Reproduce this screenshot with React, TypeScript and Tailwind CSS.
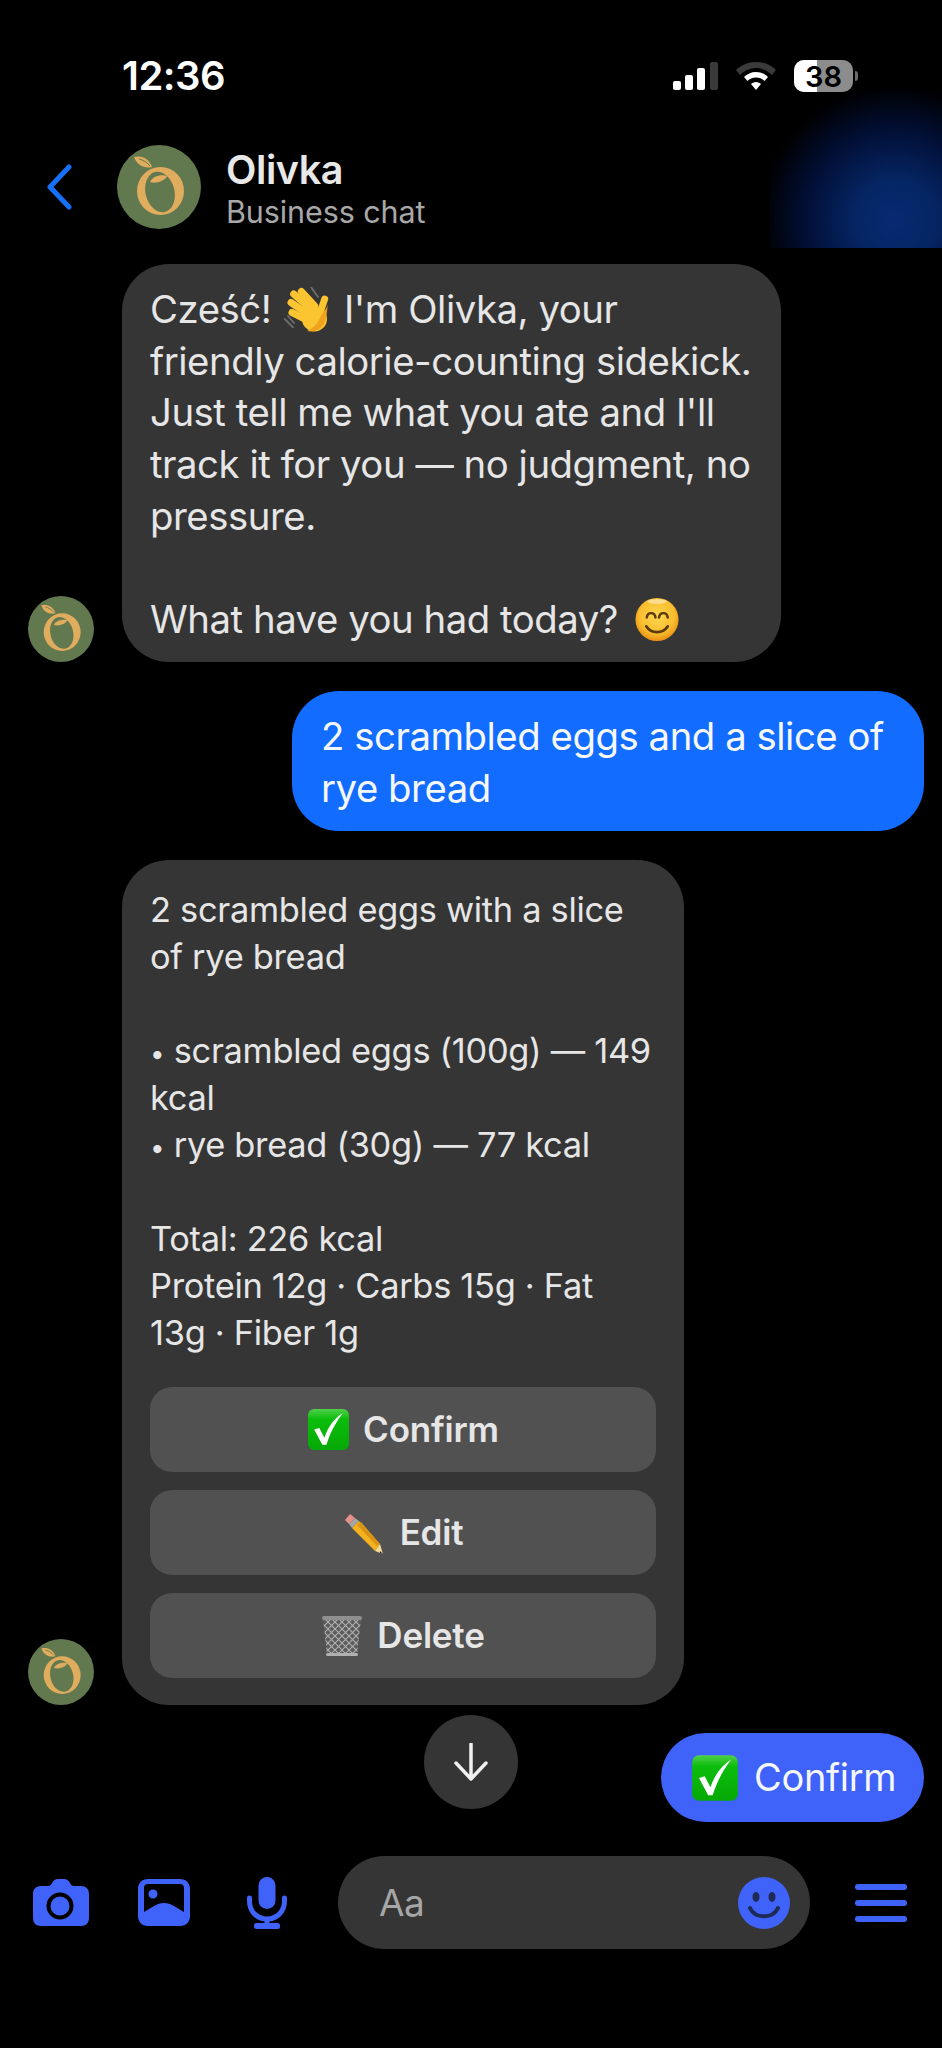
import React from "react";

const Avatar = ({ size }: { size: number }) => (
  <svg width={size} height={size} viewBox="0 0 84 84" className="shrink-0 block">
    <circle cx="42" cy="42" r="42" fill="#62784e" />
    <ellipse cx="43.500" cy="46" rx="23.500" ry="24" fill="#e0ac5e" />
    <ellipse cx="43" cy="47" rx="14.500" ry="20.500" fill="#62784e" transform="rotate(-14 43 47)" />
    <path fill="#e0ac5e" d="M17 12c7-2 15 1 18 10-8 2-15-2-18-10Z" />
    <path fill="#e0ac5e" d="M33 37c2-5 10-8 17-6-2 5-11 8-17 6Z" />
    <path stroke="#62784e" strokeWidth="1" fill="none" d="M22 14c4 1 8 3 11 7" />
  </svg>
);

const Check = ({ size }: { size: number }) => (
  <svg width={size} height={size} viewBox="0 0 42 42" className="shrink-0 block">
    <defs>
      <linearGradient id="chk" x1="0" y1="0" x2="0" y2="1">
        <stop offset="0" stopColor="#4fd04a" />
        <stop offset="0.25" stopColor="#0bbd0b" />
        <stop offset="1" stopColor="#06a806" />
      </linearGradient>
    </defs>
    <rect x="1" y="1" width="40" height="40" rx="6" fill="url(#chk)" />
    <path d="M7 21l5-1.500 5 9.500C21 18 26 11 35 5c-6 8-12 18-16 31h-4L7 21Z" fill="#fff" />
  </svg>
);

const Pencil = () => (
  <svg width="42" height="42" viewBox="0 0 42 42" className="shrink-0 block">
    <path d="M2 8l5-6 5 4-6 6-4-4Z" fill="#e8908a" />
    <path d="M6 12l6-6 4 3-7 7-3-4Z" fill="#a5a5a5" />
    <path d="M9 16l7-7 21 23-5 7L9 16Z" fill="#f5b21e" />
    <path d="M14 13l4-3 19 22-3 2L14 13Z" fill="#d99416" />
    <path d="M32 39l5-7 3 10-8-3Z" fill="#f4d79a" />
    <path d="M37 39l3 3-3-1Z" fill="#222" />
  </svg>
);

const Bin = () => (
  <svg width="42" height="42" viewBox="0 0 42 42" className="shrink-0 block">
    <defs>
      <pattern id="mesh" width="7" height="7" patternUnits="userSpaceOnUse">
        <path d="M0 0L7 7M7 0L0 7" stroke="#b0b0b0" strokeWidth="1.100" />
      </pattern>
    </defs>
    <path d="M2 3h38l-4 37H6L2 3Z" fill="#5c5c5c" />
    <path d="M2 3h38l-4 37H6L2 3Z" fill="url(#mesh)" />
    <rect x="1" y="1" width="40" height="4" rx="2" fill="#8f8f8f" />
    <rect x="5" y="38" width="32" height="3" rx="1.500" fill="#b0b0b0" />
  </svg>
);

const Wave = () => (
  <svg width="48" height="46" viewBox="0 0 48 46" className="inline-block align-[-10px] mx-[2px]">
    <path d="M27.300 0.500 34 10M0.700 32 9 40.300M4 29l6 7" stroke="#6e6e6e" strokeWidth="1.800" strokeLinecap="round" fill="none" />
    <g stroke="#fbc531" strokeWidth="7" strokeLinecap="round" fill="none">
      <path d="M17.300 4.500 30.700 19" />
      <path d="M9.700 7 25.700 21" />
      <path d="M7 15.500 22.300 26" />
      <path d="M8 25.500 21 32" />
      <path d="M40.700 12 35.700 27" />
    </g>
    <ellipse cx="30.500" cy="32" rx="12.500" ry="12.500" fill="#fbc531" />
    <path d="M23 44c9 2 17-3 19-13 1-4 1-9 2-14-1 5-5 8-7 12-3 7-7 12-14 15Z" fill="#f0a31c" />
  </svg>
);

const Smile = () => (
  <svg width="46" height="45" viewBox="0 0 46 46" className="inline-block align-[-9px] ml-[6px]">
    <defs>
      <radialGradient id="sm" cx="0.5" cy="0.42" r="0.58">
        <stop offset="0" stopColor="#fdd64f" />
        <stop offset="0.7" stopColor="#f9bd2e" />
        <stop offset="1" stopColor="#e88f14" />
      </radialGradient>
    </defs>
    <circle cx="23" cy="23" r="22" fill="url(#sm)" />
    <path d="M12.500 21c1-6 8-6 9 0M25 21c1-6 8-6 9 0" stroke="#5a3a10" strokeWidth="2.500" fill="none" strokeLinecap="round" />
    <path d="M12 30c5 8 17 8 22 0" stroke="#5a3a10" strokeWidth="2.800" fill="none" strokeLinecap="round" />
    <ellipse cx="23" cy="4.500" rx="10" ry="2.500" fill="#fff" opacity="0.45" />
  </svg>
);

const ActionButton = ({ children, gap }: { children: React.ReactNode; gap?: string }) => (
  <div className={`h-[85px] rounded-[22px] bg-[#515151] flex items-center justify-center text-[35px] font-semibold text-[#e6e6e6] tracking-[-0.2px] ${gap ?? "gap-[13px]"}`}>
    {children}
  </div>
);

export default function App() {
  return (
    <div className="relative w-[942px] h-[2048px] bg-black overflow-hidden flex flex-col font-['Inter',sans-serif] text-[#e6e6e6]">
      <div className="absolute left-[770px] top-[90px] w-[172px] h-[158px] bg-[radial-gradient(circle_135px_at_125px_130px,#062a72_0%,#052563_30%,#021038_65%,#000000_100%)]" />

      <div className="relative mt-[56px] h-[40px] flex items-center pl-[122px] pr-[84px] justify-between">
        <span className="text-[40px] font-semibold text-white tracking-[-0.5px]">12:36</span>
        <div className="flex items-center">
          <svg width="46" height="28" viewBox="0 0 46 28" className="block">
            <rect x="0" y="19" width="8" height="9" rx="2" fill="#fff" />
            <rect x="12" y="13" width="8" height="15" rx="2" fill="#fff" />
            <rect x="24" y="6" width="8" height="22" rx="2" fill="#fff" />
            <rect x="37" y="0" width="8" height="28" rx="2" fill="#3a3a3a" />
          </svg>
          <svg width="40" height="28" viewBox="0 0 40 28" className="block ml-[17px]">
            <path d="M20 0C12 0 5 3 0 8l4 5c4-4 10-7 16-7s12 3 16 7l4-5C35 3 28 0 20 0Z" fill="#3a3a3a" />
            <path d="M20 10c-5 0-9 2-12 5l3.500 4c2-2 5-3.500 8.500-3.500s6.500 1.500 8.500 3.500l3.500-4c-3-3-7-5-12-5Z" fill="#fff" />
            <path d="M20 20c-2 0-4 1-5 2l5 6 5-6c-1-1-3-2-5-2Z" fill="#fff" />
          </svg>
          <div className="relative ml-[18px] w-[59px] h-[32px] rounded-[10px] overflow-hidden bg-[#8c8c8c] flex items-center justify-center">
            <div className="absolute left-0 top-0 bottom-0 w-[23px] bg-white" />
            <span className="relative text-[29px] font-semibold text-black leading-none">38</span>
          </div>
          <div className="ml-[2px] w-[3px] h-[10px] rounded-r-full bg-[#6b6b6b]" />
        </div>
      </div>

      <div className="relative mt-[49px] h-[84px] flex items-center pl-[46px]">
        <svg width="26" height="46" viewBox="0 0 26 46" className="block shrink-0">
          <path d="M23 3 4 23l19 20" stroke="#1670f5" strokeWidth="5" strokeLinecap="round" strokeLinejoin="round" fill="none" />
        </svg>
        <div className="ml-[45px]"><Avatar size={84} /></div>
        <div className="ml-[25px] pt-[5px] flex flex-col">
          <span className="text-[39.500px] leading-[44px] font-semibold text-[#e8e8e8] tracking-[-0.4px]">Olivka</span>
          <span className="text-[30.500px] leading-[40px] text-[#a8a8a8] tracking-[-0.1px]">Business chat</span>
        </div>
      </div>

      <div className="mt-[35px] flex items-end pl-[28px] gap-[28px]">
        <Avatar size={66} />
        <div className="w-[659px] h-[398px] rounded-[47px] bg-[#353535] pl-[28px] pt-[20px] text-[38.300px] leading-[51.67px] whitespace-nowrap tracking-[-0.45px]">
          Cześć! <Wave /> I'm Olivka, your<br />
          friendly calorie-counting sidekick.<br />
          Just tell me what you ate and I'll<br />
          track it for you — no judgment, no<br />
          pressure.<br />
          <br />
          What have you had today? <Smile />
        </div>
      </div>

      <div className="mt-[29px] self-end mr-[18px] w-[632px] h-[140px] rounded-[47px] bg-[#126cff] pl-[29px] pt-[20px] text-[38.300px] leading-[51.67px] whitespace-nowrap tracking-[-0.45px] text-[#f5f8ff]">
        2 scrambled eggs and a slice of<br />
        rye bread
      </div>

      <div className="mt-[29px] flex items-end pl-[28px] gap-[28px]">
        <Avatar size={66} />
        <div className="w-[562px] h-[845px] rounded-[47px] bg-[#353535] px-[28px] pt-[26px]">
          <div className="text-[34.400px] leading-[47px] whitespace-nowrap tracking-[-0.3px]">
            2 scrambled eggs with a slice<br />
            of rye bread<br />
            <br />
            <span className="text-[26px] leading-[0]">•</span> scrambled eggs (100g) — 149<br />
            kcal<br />
            <span className="text-[26px] leading-[0]">•</span> rye bread (30g) — 77 kcal<br />
            <br />
            Total: 226 kcal<br />
            Protein 12g · Carbs 15g · Fat<br />
            13g · Fiber 1g
          </div>
          <div className="mt-[31px] flex flex-col gap-[18px]">
            <ActionButton><Check size={43} /><span>Confirm</span></ActionButton>
            <ActionButton gap="gap-[15px]"><Pencil /><span>Edit</span></ActionButton>
            <ActionButton gap="gap-[14px]"><Bin /><span>Delete</span></ActionButton>
          </div>
        </div>
      </div>

      <div className="mt-[10px] h-[117px] flex items-start pl-[424px] pr-[18px] justify-between">
        <div className="w-[94px] h-[94px] rounded-full bg-[#353535] flex items-center justify-center">
          <svg width="36" height="38" viewBox="0 0 36 38" className="block">
            <path d="M18 1v35M3 20l15 16 15-16" stroke="#f0f0f0" strokeWidth="3.500" strokeLinecap="round" strokeLinejoin="round" fill="none" />
          </svg>
        </div>
        <div className="mt-[18px] w-[263px] h-[89px] rounded-[45px] bg-[#3f63f8] pl-[30px] flex items-center gap-[15px] text-[38px] text-[#f5f7ff] tracking-[-0.3px]">
          <Check size={48} />
          <span>Confirm</span>
        </div>
      </div>

      <div className="mt-[24px] h-[93px] flex items-center pl-[33px]">
        <svg width="56" height="47" viewBox="0 0 56 47" className="block shrink-0">
          <path fill="#3f63f8" fillRule="evenodd" d="M8 7h7c2 0 3-1 4-3 1-2 3-4 6-4h6c3 0 5 2 6 4 1 2 2 3 4 3h7c5 0 8 3 8 8v24c0 5-3 8-8 8H8c-5 0-8-3-8-8V15c0-5 3-8 8-8Z" />
          <circle cx="27" cy="27" r="11.500" fill="none" stroke="#000" strokeWidth="4" />
        </svg>
        <svg width="52" height="47" viewBox="0 0 52 47" className="block shrink-0 ml-[49px]">
          <path fill="#3f63f8" fillRule="evenodd" d="M10 0h32c6 0 10 4 10 10v27c0 6-4 10-10 10H10C4 47 0 43 0 37V10C0 4 4 0 10 0ZM10 5C7.500 5 6 6.500 6 9v24c7-4 13-9 20-9s13 5 20 9V9c0-2.500-1.500-4-4-4H10Zm5 5.500a4.500 4.500 0 1 1 0 9 4.500 4.500 0 0 1 0-9Z" />
        </svg>
        <svg width="40" height="52" viewBox="0 0 40 52" className="block shrink-0 ml-[57px]">
          <rect x="11.500" y="0" width="17" height="32" rx="8.500" fill="#3f63f8" />
          <path d="M2.500 21v3c0 11 8 18 17.500 18s17.500-7 17.500-18v-3" stroke="#3f63f8" strokeWidth="5" strokeLinecap="round" fill="none" />
          <path d="M20 41v7" stroke="#3f63f8" strokeWidth="5" />
          <rect x="7" y="46" width="26" height="6" rx="2.500" fill="#3f63f8" />
        </svg>
        <div className="ml-[51px] w-[472px] h-[93px] rounded-[47px] bg-[#353535] flex items-center pl-[41px] pr-[20px] justify-between">
          <span className="text-[37px] text-[#a6a6a6] tracking-[-0.5px]">Aa</span>
          <svg width="52" height="52" viewBox="0 0 52 52" className="block">
            <circle cx="26" cy="26" r="26" fill="#3f63f8" />
            <ellipse cx="18" cy="20" rx="3.500" ry="5" fill="#1d2a55" />
            <ellipse cx="34" cy="20" rx="3.500" ry="5" fill="#1d2a55" />
            <path d="M12 31c5 11 23 11 28 0" stroke="#1d2a55" strokeWidth="4" strokeLinecap="round" fill="none" />
          </svg>
        </div>
        <div className="ml-[45px] w-[52px] flex flex-col gap-[10px]">
          <div className="h-[6px] rounded-full bg-[#3f63f8]" />
          <div className="h-[6px] rounded-full bg-[#3f63f8]" />
          <div className="h-[6px] rounded-full bg-[#3f63f8]" />
        </div>
      </div>
    </div>
  );
}
